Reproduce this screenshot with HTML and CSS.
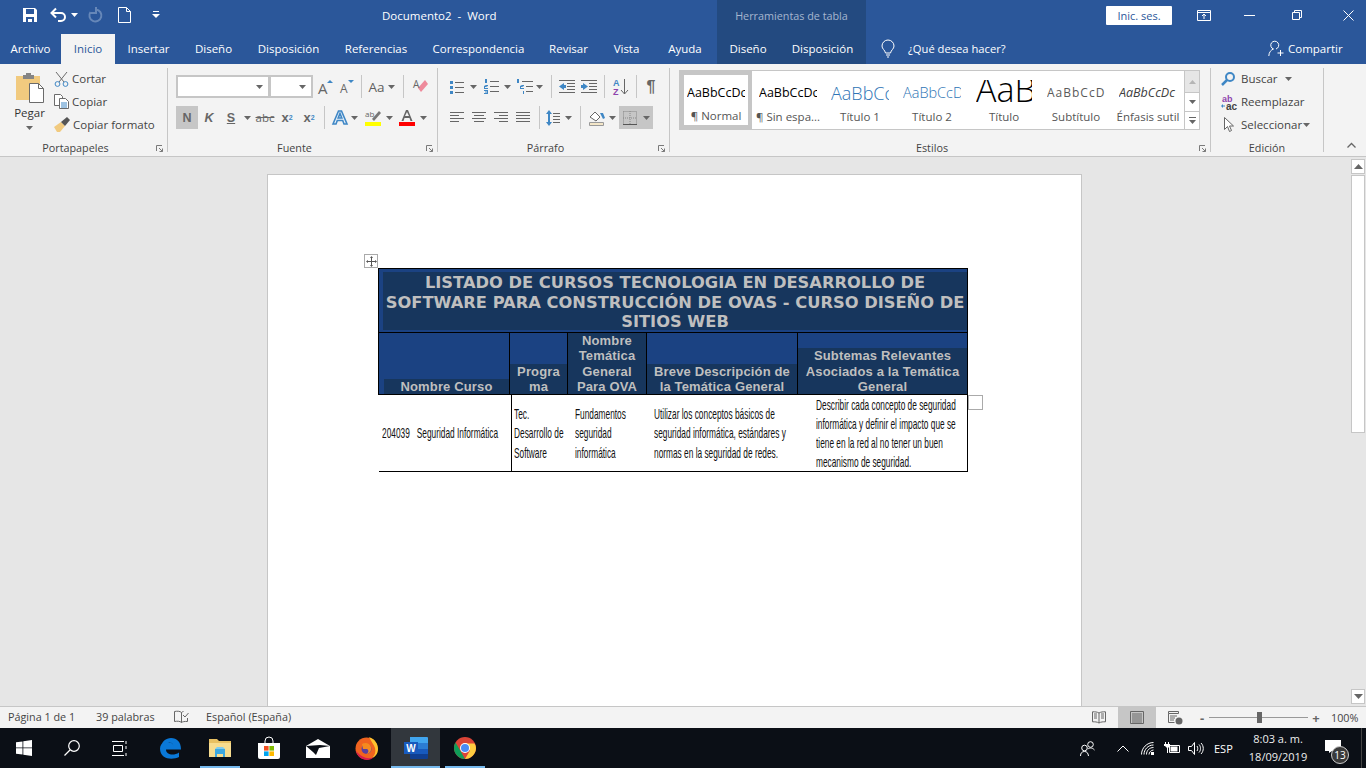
FILE: index.html
```html
<!DOCTYPE html>
<html lang="es">
<head>
<meta charset="utf-8">
<title>Documento2 - Word</title>
<link rel="stylesheet" href="styles.css">
</head>
<body>
<div class="app">
  <header class="titlebar">
    <div class="qat">
      <svg class="q-save" width="16" height="16" viewBox="0 0 16 16"><path fill="#fff" d="M1 1h12l2 2v12H1z"/><path fill="#2b579a" d="M4 2h8v5H4zM4 10h8v5h-2v-3H6v3H4z"/></svg>
      <svg class="q-undo" width="18" height="16" viewBox="0 0 18 16"><path fill="none" stroke="#fff" stroke-width="2" d="M2 6h9a4 4 0 0 1 0 8H8M6 1.500 1.500 6 6 10.500"/></svg>
      <svg class="q-caret" width="7" height="4" viewBox="0 0 7 4"><path fill="#fff" d="M0 0h7L3.500 4z"/></svg>
      <svg class="q-redo" width="16" height="16" viewBox="0 0 16 16"><path fill="none" stroke="#6d8dbb" stroke-width="2" d="M9 2.500A6 6 0 1 1 3.500 5M9 0v6H4" /></svg>
      <svg class="q-new" width="13" height="16" viewBox="0 0 13 16"><path fill="none" stroke="#fff" d="M.5.500h8l4 4v11H.5zM8.500.500v4h4"/></svg>
      <svg class="q-more" width="8" height="8" viewBox="0 0 8 8"><path fill="#fff" d="M1 0h6v1H1zM0 3h8L4 7z"/></svg>
    </div>
    <div class="doc-title">Documento2&nbsp; -&nbsp; Word</div>
    <div class="ctx-title">Herramientas de tabla</div>
    <div class="win">
      <button class="signin">Inic. ses.</button>
      <svg class="w-disp" width="14" height="11" viewBox="0 0 14 11"><path fill="none" stroke="#fff" d="M.5.500h13v10H.5zM.5 2.500h13M7 9V4.500M5 6l2-2 2 2"/></svg>
      <svg class="w-min" width="11" height="1" viewBox="0 0 11 1"><path fill="#fff" d="M0 0h11v1H0z"/></svg>
      <svg class="w-max" width="10" height="10" viewBox="0 0 10 10"><path fill="none" stroke="#fff" d="M.5 2.500h7v7h-7zM2.500 2.500v-2h7v7h-2"/></svg>
      <svg class="w-close" width="11" height="11" viewBox="0 0 11 11"><path stroke="#fff" d="M.5.500l10 10M10.500.500l-10 10"/></svg>
    </div>
  </header>

  <nav class="tabs">
    <span class="tab">Archivo</span>
    <span class="tab active">Inicio</span>
    <span class="tab">Insertar</span>
    <span class="tab">Diseño</span>
    <span class="tab">Disposición</span>
    <span class="tab">Referencias</span>
    <span class="tab">Correspondencia</span>
    <span class="tab">Revisar</span>
    <span class="tab">Vista</span>
    <span class="tab">Ayuda</span>
    <span class="tab ctx">Diseño</span>
    <span class="tab ctx">Disposición</span>
    <div class="tell">
      <svg width="14" height="18" viewBox="0 0 14 18"><path fill="none" stroke="#fff" d="M4.500 13C4 10 1 9 1 6a6 6 0 0 1 12 0c0 3-3 4-3.500 7zM5 15h4M6 17h2"/></svg>
      <span>¿Qué desea hacer?</span>
    </div>
    <div class="share">
      <svg width="17" height="17" viewBox="0 0 17 17"><path fill="none" stroke="#fff" d="M8 9a4 4 0 1 0-2.500 0C3 10 1 12 .8 16M12.500 10v6M9.500 13h6"/></svg>
      <span>Compartir</span>
    </div>
  </nav>

  <section class="ribbon">
    <div class="group g-clip">
      <div class="g-body clip-body">
        <div class="paste">
          <svg width="30" height="31" viewBox="0 0 30 31"><path fill="#f1ca7f" d="M1 4h24v24H1z"/><path fill="#858585" d="M8 3h3V1h5v2h3v4H8z"/><path fill="#fff" stroke="#6b6b6b" d="M14.500 11.500h9l5 5v14h-14z"/><path fill="none" stroke="#6b6b6b" d="M23.500 11.500v5h5"/></svg>
          <span class="paste-l">Pegar</span>
          <svg class="caret" width="7" height="4" viewBox="0 0 7 4"><path d="M0 0h7L3.500 4z"/></svg>
        </div>
        <div class="clip-list">
          <div class="clip-row">
            <svg width="15" height="16" viewBox="0 0 15 16"><path fill="none" stroke="#6b6b6b" d="M2 1l8 10M13 1L5 11"/><circle cx="3.500" cy="13" r="2.400" fill="none" stroke="#3f87c5"/><circle cx="11.500" cy="13" r="2.400" fill="none" stroke="#3f87c5"/></svg>
            <span>Cortar</span>
          </div>
          <div class="clip-row">
            <svg width="15" height="15" viewBox="0 0 15 15"><path fill="#fff" stroke="#6b6b6b" d="M.5.500h6l2 2v9h-8z"/><path fill="#fff" stroke="#6b6b6b" d="M5.500 4.500h6l3 3v7h-9z"/><path stroke="#3f87c5" d="M7 9h6M7 11h6M7 13h6"/></svg>
            <span>Copiar</span>
          </div>
          <div class="clip-row">
            <svg width="16" height="15" viewBox="0 0 16 15"><path fill="#f1ca7f" d="M0 10l7-5 4 4-5 6H3z"/><path fill="#555" d="M7 5l6-5 3 3-5 6z"/></svg>
            <span>Copiar formato</span>
          </div>
        </div>
      </div>
      <div class="g-label"><i></i><span>Portapapeles</span><svg class="launch" width="7" height="7" viewBox="0 0 7 7"><path fill="none" stroke="#7a7a7a" d="M.5 6V.500H6M3 3l3.500 3.500M6.500 3.500v3h-3"/></svg></div>
    </div>

    <div class="group g-font">
      <div class="g-body stack">
        <div class="tools f1">
          <div class="combo"><svg class="caret" width="7" height="4" viewBox="0 0 7 4"><path d="M0 0h7L3.500 4z"/></svg></div>
          <div class="combo"><svg class="caret" width="7" height="4" viewBox="0 0 7 4"><path d="M0 0h7L3.500 4z"/></svg></div>
          <div class="t"><svg width="15" height="14" viewBox="0 0 15 14"><text x="0" y="14" class="ig" font-size="15">A</text><path fill="#3f87c5" d="M9 3l3-3 3 3z"/></svg></div>
          <div class="t"><svg width="14" height="13" viewBox="0 0 14 13"><text x="0" y="13" class="ig" font-size="12">A</text><path fill="#3f87c5" d="M8 0h6l-3 3z"/></svg></div>
          <div class="t"><b class="sep"></b></div>
          <div class="t aa">Aa</div>
          <div class="t"><svg class="caret" width="7" height="4" viewBox="0 0 7 4"><path d="M0 0h7L3.500 4z"/></svg></div>
          <div class="t"><b class="sep"></b></div>
          <div class="t"><svg width="15" height="15" viewBox="0 0 15 15"><path fill="#ee8a9b" d="M5 9l7-8 3 4-7 8z"/><text x="0" y="9" font-size="10" class="ig">A</text></svg></div>
        </div>
        <div class="tools f2">
          <div class="t on fmt">N</div>
          <div class="t fmt it">K</div>
          <div class="t fmt un">S</div>
          <div class="t"><svg class="caret" width="7" height="4" viewBox="0 0 7 4"><path d="M0 0h7L3.500 4z"/></svg></div>
          <div class="t abc">abc</div>
          <div class="t fmt sm">x<sub>2</sub></div>
          <div class="t fmt sm">x<sup>2</sup></div>
          <div class="t"><b class="sep"></b></div>
          <i></i>
          <div class="t"><svg width="16" height="15" viewBox="0 0 16 15"><path fill="#eaf2fa" stroke="#3f87c5" stroke-width="1.600" d="M1 14L6.500 1h3L15 14h-3l-1.300-3.500H5.300L4 14zM6.200 8h3.600L8 3.500z"/></svg></div>
          <div class="t"><svg class="caret" width="7" height="4" viewBox="0 0 7 4"><path d="M0 0h7L3.500 4z"/></svg></div>
          <div class="t"><svg width="16" height="16" viewBox="0 0 16 16"><text x="0" y="7" font-size="8" class="ig">ab</text><path fill="#777" d="M7 9l7-8 2 2-7 8z"/><path fill="#ffff00" d="M0 12h16v4H0z"/></svg></div>
          <div class="t"><svg class="caret" width="7" height="4" viewBox="0 0 7 4"><path d="M0 0h7L3.500 4z"/></svg></div>
          <div class="t"><svg width="16" height="16" viewBox="0 0 16 16"><path fill="#666" d="M2.500 11L7 0h2l4.500 11h-2l-1-3h-5l-1 3zM6 6h4L8 2z"/><path fill="#f00" d="M0 12h16v4H0z"/></svg></div>
          <div class="t"><svg class="caret" width="7" height="4" viewBox="0 0 7 4"><path d="M0 0h7L3.500 4z"/></svg></div>
        </div>
      </div>
      <div class="g-label"><i></i><span>Fuente</span><svg class="launch" width="7" height="7" viewBox="0 0 7 7"><path fill="none" stroke="#7a7a7a" d="M.5 6V.500H6M3 3l3.500 3.500M6.500 3.500v3h-3"/></svg></div>
    </div>

    <div class="group g-para">
      <div class="g-body stack">
        <div class="tools p1">
          <div class="t"><svg width="14" height="14" viewBox="0 0 14 14"><path fill="#3f87c5" d="M0 1h3v3H0zM0 6h3v3H0zM0 11h3v3H0z"/><path fill="#666" d="M5 2h9v1H5zM5 7h9v1H5zM5 12h9v1H5z"/></svg></div>
          <div class="t"><svg class="caret" width="7" height="4" viewBox="0 0 7 4"><path d="M0 0h7L3.500 4z"/></svg></div>
          <div class="t"><svg width="15" height="15" viewBox="0 0 15 15"><path fill="#3f87c5" d="M1 0h2v4H1zM0 6h4v1H0v3h4V9H1V8h3zM0 11h4v4H0v-1h3v-.5H1v-1h2V12H0z"/><path fill="#666" d="M6 2h9v1H6zM6 7h9v1H6zM6 12h9v1H6z"/></svg></div>
          <div class="t"><svg class="caret" width="7" height="4" viewBox="0 0 7 4"><path d="M0 0h7L3.500 4z"/></svg></div>
          <div class="t"><svg width="16" height="15" viewBox="0 0 16 15"><path fill="#3f87c5" d="M0 0h2v4H0zM3 6h4v1H3v3h4V9H4V8h3zM6 12h1v3H6z"/><path fill="#666" d="M5 2h11v1H5zM9 7h7v1H9zM9 12h7v1H9z"/></svg></div>
          <div class="t"><svg class="caret" width="7" height="4" viewBox="0 0 7 4"><path d="M0 0h7L3.500 4z"/></svg></div>
          <i></i>
          <div class="t"><b class="sep"></b></div>
          <div class="t"><svg width="16" height="13" viewBox="0 0 16 13"><path fill="#666" d="M0 0h16v1H0zM8 3h8v1H8zM8 6h8v1H8zM8 9h8v1H8zM0 12h16v1H0z"/><path fill="#3f87c5" d="M0 6.500L5 3v2h2v3H5v2z"/></svg></div>
          <div class="t"><svg width="16" height="13" viewBox="0 0 16 13"><path fill="#666" d="M0 0h16v1H0zM8 3h8v1H8zM8 6h8v1H8zM8 9h8v1H8zM0 12h16v1H0z"/><path fill="#3f87c5" d="M7 6.500L2 3v2H0v3h2v2z"/></svg></div>
          <div class="t"><b class="sep"></b></div>
          <div class="t"><svg width="15" height="17" viewBox="0 0 15 17"><text x="0" y="7.500" font-size="9" class="sort-a">A</text><text x="0" y="16.500" font-size="9" class="sort-z">Z</text><path fill="none" stroke="#666" d="M11.500 1v15M8 12l3.500 4 3.500-4"/></svg></div>
          <div class="t"><b class="sep"></b></div>
          <div class="t pil">¶</div>
        </div>
        <div class="tools p2">
          <div class="t"><svg width="14" height="11" viewBox="0 0 14 11"><path fill="#666" d="M0 0h14v1H0zM0 3h9v1H0zM0 6h14v1H0zM0 9h9v1H0z"/></svg></div>
          <div class="t"><svg width="14" height="11" viewBox="0 0 14 11"><path fill="#666" d="M0 0h14v1H0zM2 3h10v1H2zM0 6h14v1H0zM2 9h10v1H2z"/></svg></div>
          <div class="t"><svg width="14" height="11" viewBox="0 0 14 11"><path fill="#666" d="M0 0h14v1H0zM5 3h9v1H5zM0 6h14v1H0zM5 9h9v1H5z"/></svg></div>
          <div class="t"><svg width="14" height="11" viewBox="0 0 14 11"><path fill="#666" d="M0 0h14v1H0zM0 3h14v1H0zM0 6h14v1H0zM0 9h14v1H0z"/></svg></div>
          <div class="t"><b class="sep"></b></div>
          <div class="t"><svg width="14" height="16" viewBox="0 0 14 16"><path fill="#3f87c5" d="M3 0l3 4H4v8h2l-3 4-3-4h2V4H0z"/><path fill="#666" d="M7 3h7v1H7zM7 6h7v1H7zM7 9h7v1H7zM7 12h7v1H7z"/></svg></div>
          <div class="t"><svg class="caret" width="7" height="4" viewBox="0 0 7 4"><path d="M0 0h7L3.500 4z"/></svg></div>
          <div class="t"><b class="sep"></b></div>
          <div class="t"><svg width="16" height="16" viewBox="0 0 16 16"><path fill="#fff" stroke="#666" d="M1 7l5-5 5 5-4 4z"/><path fill="#3f87c5" d="M11 3h3l2 5-2 1z"/><path fill="#f3e6c8" stroke="#999" d="M.5 12.500h14v3H.5z"/></svg></div>
          <div class="t"><svg class="caret" width="7" height="4" viewBox="0 0 7 4"><path d="M0 0h7L3.500 4z"/></svg></div>
          <i></i>
          <div class="t on borders"><svg width="14" height="14" viewBox="0 0 14 14"><path fill="none" stroke="#888" stroke-dasharray="1 1" d="M.5.500h13v13M.5.500v13M7 0v13M0 7h13"/><path fill="#555" d="M0 13h14v1H0z"/></svg><svg class="caret" width="7" height="4" viewBox="0 0 7 4"><path d="M0 0h7L3.500 4z"/></svg></div>
        </div>
      </div>
      <div class="g-label"><i></i><span>Párrafo</span><svg class="launch" width="7" height="7" viewBox="0 0 7 7"><path fill="none" stroke="#7a7a7a" d="M.5 6V.500H6M3 3l3.500 3.500M6.500 3.500v3h-3"/></svg></div>
    </div>

    <div class="group g-styles">
      <div class="g-body">
        <div class="gallery">
          <div class="sty selected"><span class="pv pv-n">AaBbCcDc</span><span class="nm">¶ Normal</span></div>
          <div class="sty"><span class="pv pv-n">AaBbCcDc</span><span class="nm">¶ Sin espa...</span></div>
          <div class="sty"><span class="pv pv-t1">AaBbCc</span><span class="nm">Título 1</span></div>
          <div class="sty"><span class="pv pv-t2">AaBbCcD</span><span class="nm">Título 2</span></div>
          <div class="sty"><span class="pv pv-t">AaB</span><span class="nm">Título</span></div>
          <div class="sty"><span class="pv pv-sub">AaBbCcD</span><span class="nm">Subtítulo</span></div>
          <div class="sty"><span class="pv pv-em">AaBbCcDc</span><span class="nm">Énfasis sutil</span></div>
          <div class="g-scroll">
            <div class="gs gs-off"><svg width="7" height="4" viewBox="0 0 7 4"><path fill="#b5b5b5" d="M0 4h7L3.500 0z"/></svg></div>
            <div class="gs"><svg width="7" height="4" viewBox="0 0 7 4"><path fill="#666" d="M0 0h7L3.500 4z"/></svg></div>
            <div class="gs"><svg width="7" height="7" viewBox="0 0 7 7"><path fill="#666" d="M0 0h7v1H0zM0 3h7L3.500 7z"/></svg></div>
          </div>
        </div>
      </div>
      <div class="g-label"><i></i><span>Estilos</span><svg class="launch" width="7" height="7" viewBox="0 0 7 7"><path fill="none" stroke="#7a7a7a" d="M.5 6V.500H6M3 3l3.500 3.500M6.500 3.500v3h-3"/></svg></div>
    </div>

    <div class="group g-edit">
      <div class="g-body edit-list">
        <div class="edit-row"><svg class="find-i" width="14" height="14" viewBox="0 0 14 14"><circle cx="9" cy="5" r="4" fill="none" stroke="#3f87c5" stroke-width="2"/><path stroke="#3f87c5" stroke-width="2.500" d="M6 8l-5 5"/></svg><span>Buscar</span><svg class="caret ed-c" width="7" height="4" viewBox="0 0 7 4"><path d="M0 0h7L3.500 4z"/></svg></div>
        <div class="edit-row"><svg width="16" height="16" viewBox="0 0 16 16"><text x="1" y="7.500" class="ab">ab</text><text x="5" y="15.500" class="ac">ac</text><path fill="#3f87c5" d="M0 12l2-2v1.500h2v1H2V14z"/></svg><span>Reemplazar</span></div>
        <div class="edit-row"><svg class="sel-i" width="12" height="16" viewBox="0 0 12 16"><path fill="#fff" stroke="#666" d="M1.500.500v12l3-3 2 5 2-1-2-4.500h4z"/></svg><span>Seleccionar</span><svg class="caret sel-c" width="7" height="4" viewBox="0 0 7 4"><path d="M0 0h7L3.500 4z"/></svg></div>
      </div>
      <div class="g-label ed-label"><i></i><span>Edición</span></div>
    </div>
    <svg class="collapse" width="9" height="5" viewBox="0 0 9 5"><path fill="none" stroke="#666" stroke-width="1.300" d="M.5 4.500l4-4 4 4"/></svg>
  </section>

  <main class="workspace">
    <div class="doc-area">
      <article class="page">
        <div class="table-wrap">
          <span class="move"><svg width="11" height="11" viewBox="0 0 11 11"><path fill="#555" d="M5 2h1v3h3V4l2 1.500L9 7V6H6v3h1L5.500 11 4 9h1V6H2v1L0 5.500 2 4v1h3V2H4l1.500-2L7 2z"/></svg></span>
          <span class="resize"></span>
          <table class="tbl">
            <colgroup><col class="c1"><col class="c2"><col class="c3"><col class="c4"><col class="c5"></colgroup>
            <tr class="r-title"><th colspan="5"><div class="title-in">LISTADO DE CURSOS TECNOLOGIA EN DESARROLLO DE<br>SOFTWARE PARA CONSTRUCCIÓN DE OVAS - CURSO DISEÑO DE<br>SITIOS WEB</div></th></tr>
            <tr class="r-head">
              <th class="first"><div>Nombre Curso</div></th>
              <th><div>Progra<br>ma</div></th>
              <th><div>Nombre<br>Temática<br>General<br>Para OVA</div></th>
              <th><div>Breve Descripción de<br>la Temática General</div></th>
              <th><div>Subtemas Relevantes<br>Asociados a la Temática<br>General</div></th>
            </tr>
            <tr class="r-data">
              <td class="d1"><div class="sq">204039&nbsp;&nbsp; Seguridad Informática</div></td>
              <td class="d2"><div class="sq">Tec.<br>Desarrollo de<br>Software</div></td>
              <td class="d3"><div class="sq">Fundamentos<br>seguridad<br>informática</div></td>
              <td class="d4"><div class="sq">Utilizar los conceptos básicos de<br>seguridad informática, estándares y<br>normas en la seguridad de redes.</div></td>
              <td class="d5"><div class="sq">Describir cada concepto de seguridad<br>informática y definir el impacto que se<br>tiene en la red al no tener un buen<br>mecanismo de seguridad.</div></td>
            </tr>
          </table>
        </div>
      </article>
    </div>
    <aside class="vscroll">
      <div class="sb-btn"><svg width="9" height="5" viewBox="0 0 9 5"><path fill="#666" d="M0 5h9L4.500 0z"/></svg></div>
      <div class="sb-thumb"></div>
      <div class="sb-btn"><svg width="9" height="5" viewBox="0 0 9 5"><path fill="#666" d="M0 0h9L4.500 5z"/></svg></div>
    </aside>
  </main>

  <footer class="status">
    <span class="st-p">Página 1 de 1</span>
    <span class="st-w">39 palabras</span>
    <svg class="st-b" width="15" height="14" viewBox="0 0 15 14"><path fill="none" stroke="#666" d="M7.500 2.500C6 1 3 1 .5 1.500v10c2.500-.5 5.500-.5 7 1V2.500c.5-.5 1-.8 2-1M7.500 12.500c1-.8 3-1.200 6-1V8M9 5l2 2 3.500-4"/></svg>
    <span class="st-l">Español (España)</span>
    <div class="st-right">
      <div class="v"><svg width="14" height="13" viewBox="0 0 14 13"><path fill="none" stroke="#666" d="M7 2C5 .8 3 .8.500.800v10c2.500 0 4.500 0 6.500 1.200 2-1.200 4-1.200 6.500-1.200V.800C11 .8 9 .8 7 2zM7 2v10M2 3h3M2 5h3M2 7h3M9 3h3M9 5h3M9 7h3"/></svg></div>
      <div class="v v-on"><svg width="14" height="13" viewBox="0 0 14 13"><path fill="none" stroke="#666" d="M.5.500h13v12H.5zM2 3h10M2 5h10M2 7h10M2 9h10M2 11h10"/></svg></div>
      <div class="v"><svg width="15" height="14" viewBox="0 0 15 14"><path fill="none" stroke="#666" d="M.5.500h10v2H.5zM.5 2.500v9h6M2 5h7M2 7h5M2 9h4"/><circle cx="11" cy="10" r="3.500" fill="#666"/></svg></div>
      <div class="zoom">
        <span class="z-b">-</span>
        <div class="z-track"><i></i></div>
        <span class="z-b plus">+</span>
        <span class="z-v">100%</span>
      </div>
    </div>
  </footer>

  <div class="taskbar">
    <div class="tb-left">
      <div class="tb"><svg width="16" height="16" viewBox="0 0 16 16"><path fill="#fff" d="M0 2.300L6.500 1.400v6.100H0zM7.300 1.300L16 0v7.500H7.300zM0 8.300h6.500v6.200L0 13.700zM7.300 8.300H16V16l-8.700-1.300z"/></svg></div>
      <div class="tb"><svg width="16" height="16" viewBox="0 0 16 16"><circle cx="10" cy="6" r="5.300" fill="none" stroke="#fff" stroke-width="1.200"/><path stroke="#fff" stroke-width="1.300" d="M6 10l-5.500 5.500"/></svg></div>
      <div class="tb"><svg width="16" height="15" viewBox="0 0 16 15"><path fill="none" stroke="#fff" d="M1.500 4.500h9v6h-9zM0 .500h12M0 14.500h12M14 0v3M14 5v3M14 12v3"/></svg></div>
      <i class="tb-gap"></i>
      <div class="tb"><svg width="21" height="21" viewBox="0 0 21 21"><path fill="#0a78d7" d="M.5 10C1.500 3.500 6 0 11 0c6 0 10 4 10 11.500H6c0 5.500 8 6.500 13 3v4.500c-6 3-19 3-19-8.500 0-3 2-6 5-7.500-1.500 1.500-2.500 3-2.800 4.500 3-4 11-4 11 0 0-3-5-4-5.700-1.500z"/></svg></div>
      <div class="tb tb-run"><svg width="22" height="18" viewBox="0 0 22 18"><path fill="#e8c062" d="M0 0h8l2 2h12v16H0z"/><path fill="#f7dc8f" d="M0 4h22v14H0z"/><path fill="#3da8e0" d="M6 10h10v8h-2v-3H8v3H6z"/><path fill="#7fcdf0" d="M8 8h6l2 2H6z"/></svg></div>
      <div class="tb"><svg width="22" height="22" viewBox="0 0 22 22"><path fill="none" stroke="#fff" d="M7 6V4a4 4 0 0 1 8 0v2"/><path fill="#fff" d="M0 6h22v14a2 2 0 0 1-2 2H2a2 2 0 0 1-2-2z"/><path fill="#f25022" d="M6 9h4.600v4.600H6z"/><path fill="#7fba00" d="M11.400 9H16v4.600h-4.600z"/><path fill="#00a4ef" d="M6 14.400h4.600V19H6z"/><path fill="#ffb900" d="M11.400 14.400H16V19h-4.600z"/></svg></div>
      <div class="tb"><svg width="24" height="19" viewBox="0 0 24 19"><path fill="#fff" d="M0 7L12 0l12 7v12H0z"/><path fill="#0b0f16" d="M0 7l7 6 3 3 3-7 11-2-10-1z"/></svg></div>
      <div class="tb"><svg width="23" height="23" viewBox="0 0 23 23"><circle cx="11.500" cy="11.500" r="11" fill="#f0631f"/><path fill="#ffc22e" d="M14 0c6 2 9 7 9 12s-3 8-6 9c3-3 4-6 3-10-1-3-4-7-6-11z"/><path fill="#d81c4e" d="M1 14c1 5 6 9 11 9 3 0 5-1 7-3-6 3-13 0-18-6z"/><circle cx="11.500" cy="12" r="5" fill="#5a3f9e"/><path fill="#f58a1f" d="M7 7c3-2 8-1 9 3 1 3-1 7-5 7 3-1 3-4 1-5H8z"/></svg></div>
      <div class="tb tb-word"><svg width="24" height="22" viewBox="0 0 24 22"><path fill="#41a5ee" d="M6 0h17a1 1 0 0 1 1 1v5H6z"/><path fill="#2b7cd3" d="M6 6h18v6H6z"/><path fill="#185abd" d="M6 12h18v5H6z"/><path fill="#103f91" d="M6 17h18v4a1 1 0 0 1-1 1H7a1 1 0 0 1-1-1z"/><path fill="#185abd" d="M0 5h14v12H0z"/><text x="7" y="15" class="w-t">W</text></svg></div>
      <div class="tb tb-run"><svg width="22" height="22" viewBox="0 0 22 22"><circle cx="11" cy="11" r="11" fill="#db4437"/><path fill="#0f9d58" d="M1.500 5.500L6.500 14 11 22C5 22 0 17 0 11c0-2 .5-4 1.500-5.500z"/><path fill="#ffcd40" d="M11 6.500h9.500c1 1.500 1.500 3 1.500 4.500 0 6-5 11-11 11l5-8.500z"/><circle cx="11" cy="11" r="5" fill="#fff"/><circle cx="11" cy="11" r="4" fill="#4a8bf5"/></svg></div>
    </div>
    <div class="tray">
      <svg class="tr-p" width="15" height="15" viewBox="0 0 15 15"><circle cx="4.500" cy="7" r="2.800" fill="none" stroke="#fff"/><circle cx="10.500" cy="3.500" r="2.800" fill="none" stroke="#fff"/><path fill="none" stroke="#fff" d="M.5 15c0-3 1.500-4.500 4-4.500S8 12 8.500 15M8 8c1-1 4-2 6.500 1"/></svg>
      <svg class="tr-c" width="12" height="7" viewBox="0 0 12 7"><path fill="none" stroke="#fff" d="M.5 6.500L6 1l5.500 5.500"/></svg>
      <svg class="tr-w" width="13" height="13" viewBox="0 0 13 13"><path fill="none" stroke="#fff" d="M.5 12.500C.5 6 6 .5 12.500.500M3 12.500c0-5 4-9.500 9.500-9.500M5.500 12.500c0-4 3-7 7-7M8 12.500c0-2 2-4.500 4.500-4.500"/><path fill="#fff" d="M10 10h3v3h-3z"/></svg>
      <svg class="tr-b" width="16" height="12" viewBox="0 0 16 12"><path fill="none" stroke="#fff" d="M5.500 3.500h10v7h-10z"/><path fill="#fff" d="M6.500 4.500h7v5h-7zM1 0h1v2h2V0h1v2h1v2L4 6v5H3V6L1 4H0V2h1z"/></svg>
      <svg class="tr-s" width="16" height="13" viewBox="0 0 16 13"><path fill="none" stroke="#fff" d="M.5 4.500h3l3-4v12l-3-4h-3zM9 4c1 1.500 1 3.500 0 5M11 2.500c2 2 2 6 0 8M13 1c3 3 3 8 0 11"/></svg>
      <span class="tr-e">ESP</span>
      <div class="clock"><span>8:03 a. m.</span><span>18/09/2019</span></div>
      <div class="notif"><svg width="16" height="13" viewBox="0 0 16 13"><path fill="#fff" d="M0 0h16v11H7l-3 2v-2H0z"/></svg><span class="badge">13</span></div>
    </div>
  </div>
</div>
</body>
</html>
```
FILE: styles.css
```css
* { box-sizing: border-box; }
html, body { margin: 0; height: 100%; overflow: hidden; }
body { font-family: "Open Sans", "Liberation Sans", sans-serif; font-size: 11.5px; color: #444; background: #e6e6e6; }
i { display: block; font-style: normal; }
svg { display: block; flex: none; overflow: visible; }
.app { width: 1366px; height: 768px; display: flex; flex-direction: column; }

/* title bar */
.titlebar { height: 34px; background: #2b579a; color: #fff; display: grid; grid-template-columns: 340px 377px 149px 1fr; }
.qat { display: flex; align-items: center; padding: 0 0 4px 22px; }
.q-undo { margin-left: 12px; }
.q-caret { margin-left: 3px; }
.q-redo { margin-left: 9px; opacity: .9; }
.q-new { margin-left: 15px; }
.q-more { margin-left: 21px; }
.doc-title { font-size: 11.5px; padding: 8px 0 0 42px; white-space: nowrap; }
.ctx-title { background: #234a80; color: #a6b6cf; text-align: center; padding-top: 8px; font-size: 10.8px; white-space: nowrap; }
.win { display: flex; align-items: center; padding-bottom: 4px; position: relative; }
.signin { width: 66px; height: 19px; margin-left: 240px; border: 0; background: #fff; color: #2b579a; font: 11px "Open Sans", sans-serif; padding: 0; border-radius: 1px; }
.w-disp { margin-left: 25px; }
.w-min { margin-left: 33px; }
.w-max { margin-left: 37px; }
.w-close { margin-left: 41px; }

/* tabs */
.tabs { height: 30px; background: #2b579a; color: #fff; display: grid; grid-template-columns: 61px 54px 67px 63px 87px 88px 117px 63px 53px 64px 62px 87px 402px 1fr; }
.tab { text-align: center; line-height: 29px; white-space: nowrap; font-size: 11.5px; }
.tab.active { background: #f3f3f3; color: #2b579a; }
.tab.ctx { background: #234a80; }
.tell { display: flex; align-items: center; gap: 13px; padding-left: 15px; padding-bottom: 1px; font-size: 11.2px; white-space: nowrap; }
.share { display: flex; align-items: center; gap: 3px; padding-bottom: 1px; white-space: nowrap; font-size: 11.5px; }

/* ribbon */
.ribbon { height: 93px; background: #f3f3f3; border-bottom: 1px solid #c6c6c6; display: flex; position: relative; padding-top: 4px; }
.group { height: 84px; border-right: 1px solid #c6c6c6; display: flex; flex-direction: column; flex: none; }
.g-clip { width: 168px; }
.g-font { width: 270px; }
.g-para { width: 232px; }
.g-styles { width: 541px; }
.g-edit { width: 113px; }
.g-body { height: 75px; flex: none; }
.g-label { height: 10px; line-height: 10px; display: grid; grid-template-columns: 1fr auto 1fr; align-items: center; padding: 0 16px 0 0; font-size: 10.800px; color: #444; white-space: nowrap; }
.launch { justify-self: end; margin-right: -12px; }
.ed-label { padding: 1px 0 0; height: 11px; }
.caret { fill: #666; }

.clip-body { display: flex; }
.paste { width: 55px; display: flex; flex-direction: column; align-items: center; padding: 4px 0 0 4px; }
.paste-l { margin-top: 3px; line-height: 14px; color: #333; }
.paste .caret { margin-top: 6px; }
.clip-list { display: flex; flex-direction: column; margin-top: -1px; }
.clip-row { height: 23px; flex: none; display: flex; align-items: center; gap: 3px; white-space: nowrap; width: 110px; }
.clip-row svg { margin-left: -1px; }

.stack { padding-top: 7px; display: flex; flex-direction: column; gap: 8px; }
.tools { display: grid; height: 23px; }
.t { display: flex; align-items: center; justify-content: center; height: 23px; min-width: 0; color: #5f5f5f; }
.sep { display: block; width: 1px; height: 23px; background: #c6c6c6; }
.on { background: #c6c6c6; }
.f1 { margin-left: 8px; grid-template-columns: 94px 43px 24px 20px 8px 23px 6px 18px 16px; }
.f2 { margin-left: 8px; grid-template-columns: 22px 22px 22px 10px 26px 18px 26px 4px 7px 14px 14px 24px 8px 28px 4px; }
.p1 { margin-left: 10px; grid-template-columns: 17px 16px 20px 12px 24px 4px 6px 8px 23px 22px 8px 24px 8px 22px; }
.p2 { margin-left: 10px; grid-template-columns: 18px 26px 18px 26px 6px 22px 8px 16px 18px 12px 1px 34px; }
.combo { background: #fff; border: 2px solid #c6c6c6; height: 23px; display: flex; align-items: center; justify-content: flex-end; padding-right: 5px; }
.combo + .combo { border-left-width: 1px; }
.ig { fill: #666; font-family: "Open Sans", sans-serif; }
.aa { font-size: 13.5px; }
.fmt { font: bold 12.5px "Liberation Sans", sans-serif; color: #666; }
.it { font-style: italic; }
.un { text-decoration: underline; }
.sm { font-size: 13px; }
.sm sub, .sm sup { font-size: 7px; color: #3f87c5; line-height: 0; }
.abc { font: 11.5px "Open Sans", sans-serif; text-decoration: line-through; color: #666; }
.pil { font-size: 16px; color: #666; font-family: "Liberation Sans", sans-serif; font-weight: bold; }
.sort-a { fill: #3f87c5; font: bold 9px "Liberation Sans", sans-serif; }
.sort-z { fill: #8e44ad; font: bold 9px "Liberation Sans", sans-serif; }
.borders { gap: 6px; justify-content: flex-start; padding-left: 4px; }

/* styles gallery */
.gallery { margin: 2px 0 0 9px; width: 521px; height: 60px; background: #fff; border: 1px solid #c6c6c6; display: grid; grid-template-columns: repeat(7, 72px) 1fr; }
.sty { display: flex; flex-direction: column; align-items: center; overflow: hidden; }
.sty.selected { border: 4px solid #c6c6c6; }
.pv { height: 37px; width: 58px; line-height: 44px; white-space: nowrap; overflow: hidden; text-align: left; color: #000; flex: none; }
.selected .pv { height: 33px; }
.pv-n { font: 12.5px/44px "Open Sans", sans-serif; }
.selected .pv-n { line-height: 36px; }
.pv-t1 { color: #2e74b5; font: 300 18px/44px "Open Sans", sans-serif; }
.pv-t2 { color: #2e74b5; font: 300 14.5px/44px "Open Sans", sans-serif; }
.pv-t { font: 300 34px/18px "Open Sans", sans-serif; width: 56px; height: 28px; margin-top: 9px; }
.pv-sub { color: #5a5a5a; font: 12px/44px "Open Sans", sans-serif; letter-spacing: 1px; }
.pv-em { color: #404040; font: italic 12.5px/44px "Open Sans", sans-serif; }
.nm { font-size: 11.5px; line-height: 18px; white-space: nowrap; color: #555; }
.selected .nm { line-height: 16px; }
.g-scroll { display: grid; grid-template-rows: 21px 19px 1fr; border-left: 1px solid #c6c6c6; }
.gs { display: flex; align-items: center; justify-content: center; }
.gs + .gs { border-top: 1px solid #c6c6c6; }
.gs-off { background: #e6e6e6; }

/* editing */
.edit-list { display: flex; flex-direction: column; margin-top: -1px; padding-left: 10px; }
.edit-row { height: 23px; flex: none; display: flex; align-items: center; gap: 4px; white-space: nowrap; }
.find-i { margin-right: 2px; }
.sel-i { margin: 0 2px; }
.ed-c { margin-left: 3px; }
.sel-c { margin-left: -3px; }
.ab { fill: #8e44ad; font: bold 9px "Liberation Sans", sans-serif; }
.ac { fill: #444; font: bold 10px "Liberation Sans", sans-serif; }
.collapse { position: absolute; right: 10px; top: 79px; }

/* document */
.workspace { flex: 1; min-height: 0; display: flex; }
.doc-area { width: 1350px; overflow: hidden; padding: 17px 0 0 267px; }
.page { width: 815px; height: 800px; background: #fff; border: 1px solid #c6c6c6; padding: 93px 0 0 110px; }
.table-wrap { position: relative; width: 589px; }
.move { position: absolute; left: -14px; top: -14px; width: 14px; height: 14px; border: 1px solid #aaa; background: #fff; display: flex; align-items: center; justify-content: center; }
.resize { position: absolute; left: 590px; top: 127px; width: 15px; height: 15px; border: 1px solid #aaa; background: #fff; }
.tbl { border-collapse: collapse; table-layout: fixed; width: 589px; color: #000; }
.c1 { width: 131px; } .c2 { width: 58px; } .c3 { width: 79px; } .c4 { width: 151px; } .c5 { width: 170px; }
.tbl th, .tbl td { padding: 0; }
.r-title th { height: 64px; background: #1b4282; border: 1px solid #000; padding: 3px 0 2px 4px; vertical-align: top; }
.title-in { background: #17365d; color: #bfbfbf; font: bold 16.3px/19.500px "DejaVu Sans", "Liberation Sans", sans-serif; text-align: center; height: 58px; white-space: nowrap; padding-top: 1px; }
.r-head th { height: 62px; background: #1b4282; border: 1px solid #000; border-top: 0; vertical-align: bottom; }
.r-head div { background: #17365d; color: #bfbfbf; font: bold 13px/15.3px "Liberation Sans", sans-serif; letter-spacing: .15px; text-align: center; white-space: nowrap; }
.r-head .first div { margin-left: 5px; }
.r-data td { height: 77px; border-bottom: 1px solid #000; vertical-align: middle; }
.r-data .d5 { border-right: 1px solid #000; }
.r-data .d2 { background: linear-gradient(#000, #000) 1px 0 / 1px 100% no-repeat; }
.sq { font: 15px/19.500px "Liberation Sans", sans-serif; color: #111; white-space: nowrap; transform: scaleX(.555); transform-origin: left center; }
.d1 .sq { margin-left: 3px; }
.d2 .sq { margin-left: 4px; }
.d3 .sq { margin-left: 7px; }
.d4 .sq { margin-left: 7px; }
.d5 .sq { margin-left: 18px; line-height: 19px; }

.vscroll { width: 16px; background: #e6e6e6; display: flex; flex-direction: column; padding: 2px 1px 2px; }
.sb-btn { height: 15px; background: #fff; border: 1px solid #c6c6c6; display: flex; align-items: center; justify-content: center; flex: none; }
.sb-thumb { height: 258px; margin-top: 1px; background: #fff; border: 1px solid #c6c6c6; margin-bottom: auto; }

/* status */
.status { height: 22px; flex: none; background: #f3f3f3; border-top: 1px solid #c6c6c6; display: flex; align-items: center; font-size: 10.800px; color: #444; white-space: nowrap; }
.st-p { margin: 0 0 2px 8px; width: 88px; }
.st-w { width: 78px; margin-bottom: 2px; }
.st-b { margin: 0 17px 2px 0; }
.st-l { margin-bottom: 2px; }
.st-right { margin-left: auto; display: flex; align-items: center; height: 100%; }
.v { width: 38px; height: 21px; display: flex; align-items: center; justify-content: center; }
.v-on { background: #c6c6c6; }
.zoom { display: flex; align-items: center; margin-left: 3px; width: 169px; }
.z-b { width: 10px; text-align: center; font-weight: bold; font-size: 13px; color: #666; }
.z-track { width: 99px; height: 1px; background: #999; margin: 0 3px 0 2px; position: relative; }
.z-track i { position: absolute; left: 48px; top: -5px; width: 5px; height: 11px; background: #666; }
.z-v { margin-left: 10px; }

/* taskbar */
.taskbar { height: 40px; flex: none; background: #0b0f16; display: flex; justify-content: space-between; color: #fff; }
.tb-left { display: flex; }
.tb { width: 48px; height: 40px; display: flex; align-items: center; justify-content: center; }
.tb-gap { width: 2px; }
.tb-gap ~ .tb { width: 49px; }
.tb-run { background: linear-gradient(#76b9ed, #76b9ed) center bottom / 40px 2px no-repeat; }
.tb-word { background: linear-gradient(#76b9ed, #76b9ed) center bottom / 100% 2px no-repeat, #32373d; }
.w-t { fill: #fff; font: bold 10px "Liberation Sans", sans-serif; text-anchor: middle; }
.tray { display: flex; align-items: center; }
.tr-c { margin-left: 22px; }
.tr-w { margin-left: 12px; }
.tr-b { margin-left: 10px; }
.tr-s { margin-left: 8px; }
.tr-e { margin-left: 10px; font-size: 11px; width: 22px; }
.clock { display: flex; flex-direction: column; align-items: center; width: 60px; margin-left: 12px; font-size: 11px; line-height: 18px; color: #eee; white-space: nowrap; }
.notif { position: relative; margin-left: 17px; width: 37px; height: 40px; display: flex; align-items: flex-start; padding-top: 12px; border-right: 1px solid #444; margin-right: 4px; }
.badge { position: absolute; left: 6px; top: 18px; width: 18px; height: 18px; border-radius: 50%; background: #3a3a3a; border: 1px solid #ccc; font-size: 10px; line-height: 16px; text-align: center; color: #fff; }
```
